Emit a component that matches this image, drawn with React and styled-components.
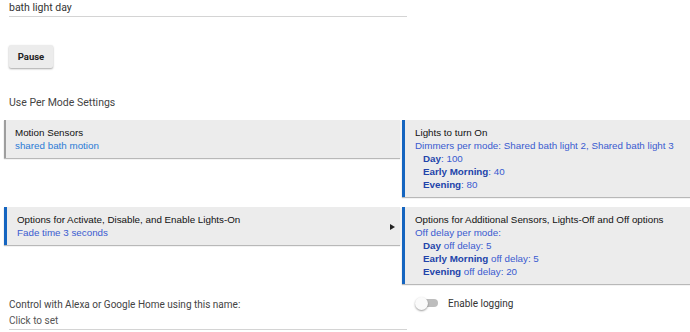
import React from "react";
import styled, { createGlobalStyle } from "styled-components";

const Global = createGlobalStyle`
  html, body {
    margin: 0;
    padding: 0;
    background: #fff;
    overflow: hidden;
  }
  body {
    font-family: Roboto, "Liberation Sans", Arial, sans-serif;
    color: #333;
  }
`;

const Page = styled.div`
  width: 690px;
  height: 332px;
  overflow: hidden;
`;

const Field = styled.div`
  margin-left: 9px;
  width: 398px;
  border-bottom: 1px solid #d4d4d4;
  font-size: 10.5px;
  line-height: 14px;
  color: #333;
  padding-top: ${(p) => p.$top || 0}px;
  padding-bottom: 1px;
`;

const PauseButton = styled.button`
  display: block;
  margin: 28px 0 0 9px;
  width: 44px;
  height: 23px;
  border: none;
  border-radius: 2px;
  background: #ececec;
  box-shadow: 0 1px 2px rgba(0, 0, 0, 0.35);
  font-family: Roboto, "Liberation Sans", sans-serif;
  font-weight: 700;
  font-size: 9.5px;
  color: #222;
  padding: 0;
`;

const SectionLabel = styled.div`
  margin: 28px 0 0 9px;
  font-size: 10.5px;
  line-height: 14px;
  color: #444;
`;

const Grid = styled.div`
  display: grid;
  grid-template-columns: 396px 1fr;
  column-gap: 2px;
  row-gap: 10px;
  align-items: start;
  margin: 10px 0 0 4px;
`;

const Card = styled.div`
  position: relative;
  background: #ececec;
  border-left: ${(p) => (p.$accent ? "3px solid #1565c0" : "2px solid #9e9e9e")};
  box-shadow: 0 1px 1px rgba(0, 0, 0, 0.28);
  padding: 6px 4px 6px ${(p) => (p.$accent ? 10 : 9)}px;
  font-family: "Liberation Sans", Arial, sans-serif;
  font-size: 9.8px;
  line-height: 13px;
  white-space: nowrap;
`;

const Title = styled.div`
  color: #111;
`;

const Sub = styled.div`
  color: ${(p) => p.$color || "#3a5bd0"};
`;

const Item = styled.div`
  color: #3a5bd0;
  padding-left: 8px;
  b {
    color: #2244aa;
  }
`;

const Arrow = styled.span`
  position: absolute;
  right: 5px;
  top: 17px;
  width: 0;
  height: 0;
  border-top: 3px solid transparent;
  border-bottom: 3px solid transparent;
  border-left: 5px solid #222;
`;

const Bottom = styled.div`
  display: grid;
  grid-template-columns: 398px 1fr;
  column-gap: 9px;
  margin: 12px 0 0 9px;
`;

const NameLabel = styled.div`
  font-size: 10px;
  line-height: 14px;
  color: #444;
  padding-top: 2px;
`;

const NameField = styled.div`
  font-size: 10px;
  line-height: 14px;
  color: #555;
  padding: 2px 0 1px;
  border-bottom: 1px solid #d4d4d4;
`;

const ToggleRow = styled.label`
  display: flex;
  align-items: center;
  gap: 10px;
  font-size: 10px;
  color: #333;
  height: 14px;
`;

const Track = styled.span`
  position: relative;
  width: 22px;
  height: 8px;
  border-radius: 4px;
  background: #bdbdbd;
  &::after {
    content: "";
    position: absolute;
    left: -1px;
    top: -2.5px;
    width: 13px;
    height: 13px;
    border-radius: 50%;
    background: #fafafa;
    box-shadow: 0 1px 2px rgba(0, 0, 0, 0.4);
  }
`;

export default function App() {
  return (
    <Page>
      <Global />
      <Field $top={1}>bath light day</Field>
      <PauseButton>Pause</PauseButton>
      <SectionLabel>Use Per Mode Settings</SectionLabel>
      <Grid>
        <Card>
          <Title>Motion Sensors</Title>
          <Sub $color="#2a7bd6">shared bath motion</Sub>
        </Card>
        <Card $accent>
          <Title>Lights to turn On</Title>
          <Sub>Dimmers per mode: Shared bath light 2, Shared bath light 3</Sub>
          <Item><b>Day</b>: 100</Item>
          <Item><b>Early Morning</b>: 40</Item>
          <Item><b>Evening</b>: 80</Item>
        </Card>
        <Card $accent>
          <Title>Options for Activate, Disable, and Enable Lights-On</Title>
          <Sub>Fade time 3 seconds</Sub>
          <Arrow />
        </Card>
        <Card $accent>
          <Title>Options for Additional Sensors, Lights-Off and Off options</Title>
          <Sub>Off delay per mode:</Sub>
          <Item><b>Day</b> off delay: 5</Item>
          <Item><b>Early Morning</b> off delay: 5</Item>
          <Item><b>Evening</b> off delay: 20</Item>
        </Card>
      </Grid>
      <Bottom>
        <div>
          <NameLabel>Control with Alexa or Google Home using this name:</NameLabel>
          <NameField>Click to set</NameField>
        </div>
        <ToggleRow>
          <Track />
          Enable logging
        </ToggleRow>
      </Bottom>
    </Page>
  );
}
